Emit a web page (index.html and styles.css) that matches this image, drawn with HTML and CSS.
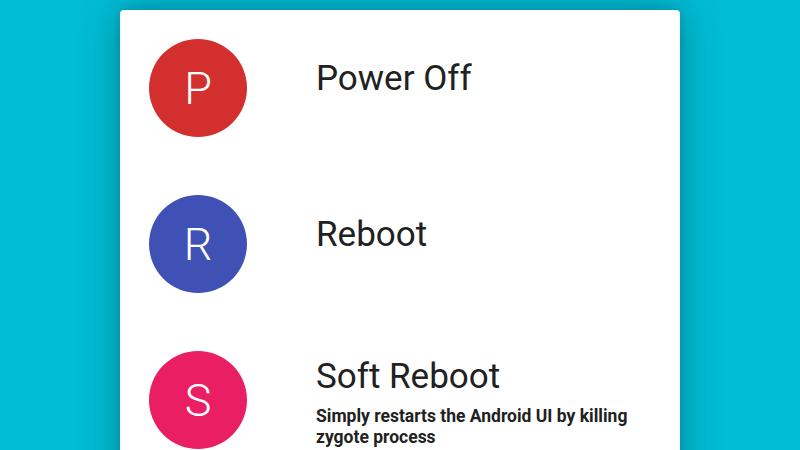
FILE: index.html
```html
<!DOCTYPE html>
<html>
<head>
<meta charset="utf-8">
<link rel="stylesheet" href="styles.css">
</head>
<body>
<div class="card">
  <div class="row">
    <div class="avatar red">P</div>
    <div class="text">
      <div class="title">Power Off</div>
      <div class="sub"></div>
    </div>
  </div>
  <div class="row">
    <div class="avatar blue">R</div>
    <div class="text">
      <div class="title">Reboot</div>
      <div class="sub"></div>
    </div>
  </div>
  <div class="row">
    <div class="avatar pink">S</div>
    <div class="text">
      <div class="title">Soft Reboot</div>
      <div class="sub">Simply restarts the Android UI by killing zygote process</div>
    </div>
  </div>
</div>
</body>
</html>
```
FILE: styles.css
```css
html, body {
  margin: 0;
  padding: 0;
  height: 100%;
  overflow: hidden;
}
body {
  background: #00bcd4;
  font-family: Roboto, "Noto Sans", sans-serif;
  color: #212121;
}
.card {
  width: 560px;
  margin: 10px 0 0 120px;
  background: #fff;
  border-radius: 4px;
  box-shadow: 0 0 40px rgba(0, 0, 0, 0.28), 0 0 10px rgba(0, 0, 0, 0.12);
  height: 600px;
}
.row {
  display: flex;
  align-items: center;
  height: 156px;
  padding-left: 29px;
}
.avatar {
  width: 98px;
  height: 98px;
  border-radius: 50%;
  color: #fff;
  font-weight: 300;
  font-size: 45px;
  display: flex;
  align-items: center;
  justify-content: center;
  flex-shrink: 0;
}
.red { background: #d32f2f; }
.blue { background: #3f51b5; }
.pink { background: #e91e63; }
.text {
  margin-left: 69px;
  width: 330px;
}
.title {
  font-size: 35px;
  line-height: 44px;
  padding-top: 3px;
}
.sub {
  font-size: 17.5px;
  font-weight: 700;
  line-height: 21px;
  min-height: 14px;
  margin-top: 7px;
}
```
